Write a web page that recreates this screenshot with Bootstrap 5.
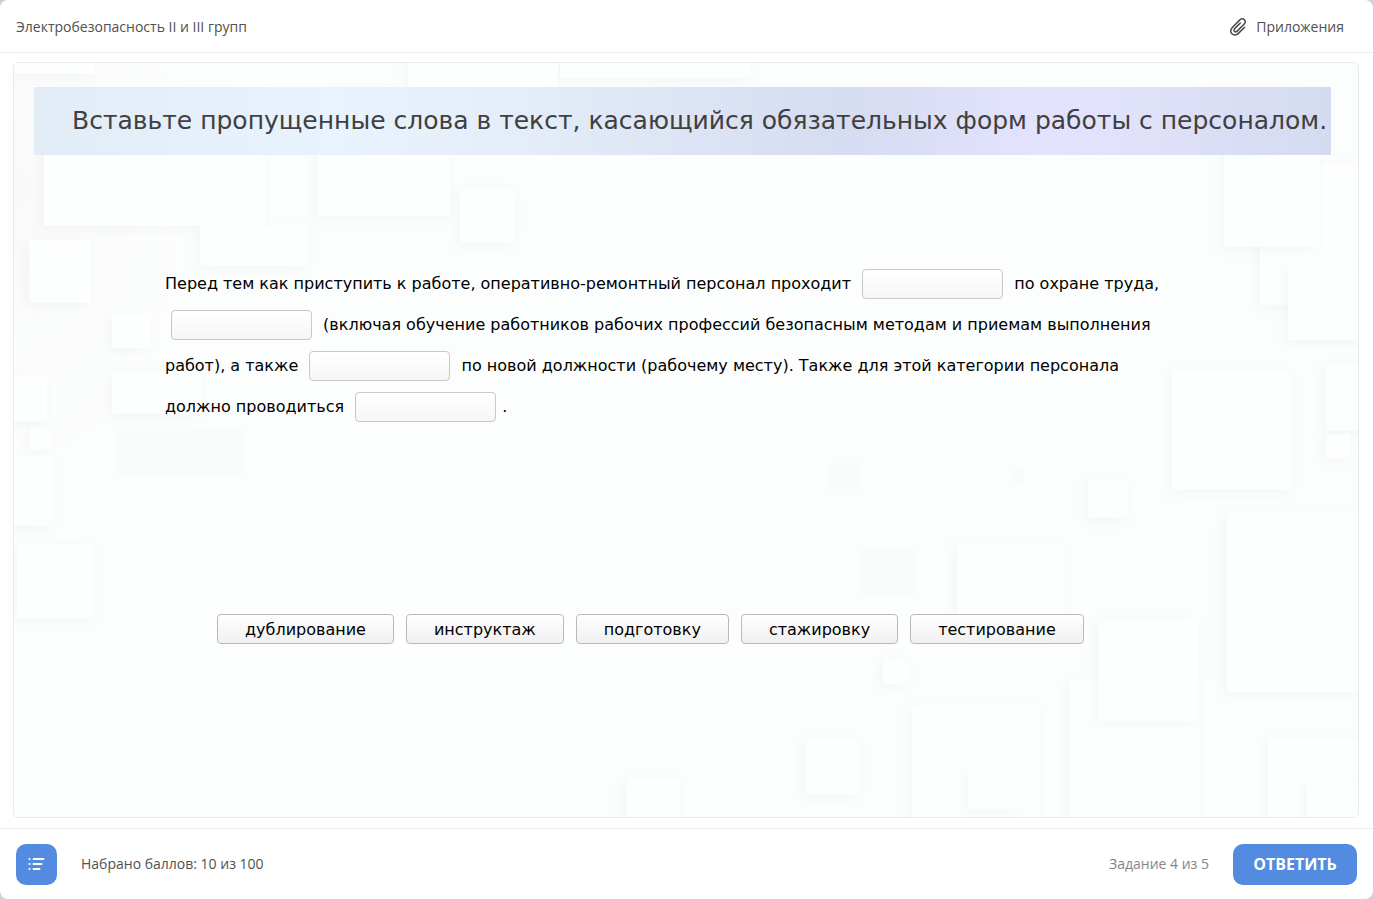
<!DOCTYPE html>
<html lang="ru">
<head>
<meta charset="utf-8">
<meta name="viewport" content="width=device-width, initial-scale=1">
<title>Электробезопасность II и III групп</title>
<link href="https://cdn.jsdelivr.net/npm/bootstrap@5.3.0/dist/css/bootstrap.min.css" rel="stylesheet">
<style>
  html { background: #cfcfcf; }
  body { font-family: "Open Sans", "Noto Sans", sans-serif; font-size: 14px; line-height: 20px; color: #505050; background: transparent; }
  .player { background: #fff; border-radius: 8px; }
  .top-bar { height: 53px; border-bottom: 1px solid #ececec; padding: 2px 29px 0 16px; }
  .attach-link { color: #505050; gap: 9px; }
  .stage { margin: 9px 14px 10px 13px; border: 1px solid #e9eaea; border-radius: 5px; background: #fcfefd; font-family: Verdana, "DejaVu Sans", sans-serif; }
  .backdrop { z-index: 0; }
  .stage-content { z-index: 1; padding: 24px 27px 40px 20px; }
  .task-banner { min-height: 68px; padding-left: 38px; background: linear-gradient(90deg, #e2ecf7 0%, #e9f3fd 23%, #e4edf9 37%, #d6dcf1 63%, #e4e3fe 78%, #dfe1f9 86%, #d4dbf0 100%); }
  .task-title { font-size: 25px; line-height: 34px; color: #404040; font-weight: 400; }
  .cloze { max-width: 1020px; margin: 108px 0 0 131px; font-size: 16px; line-height: 41px; color: #000; }
  .slot { width: 141px; height: 30px; margin: 0 6px 2px; vertical-align: middle; border: 1px solid #c8c8c8; border-radius: 4px; background: linear-gradient(#fff, #f6f6f6); padding: 0 8px; font-size: 16px; }
  .word-bank { margin: 187px 0 0 183px; gap: 12px; }
  .word-chip { height: 30px; padding: 1px 27px 0; border: 1px solid #b8baba; border-radius: 4px; background: linear-gradient(#fff, #f0f0f0); color: #000; font-size: 16px; line-height: 28px; }
  .bottom-bar { min-height: 71px; border-top: 1px solid #ececec; padding: 0 16px; }
  .menu-btn, .answer-btn { background: #528be0; color: #fff; height: 41px; border: 0; border-radius: 10px; }
  .menu-btn { width: 41px; }
  .answer-btn { width: 124px; font-size: 16px; font-weight: 700; }
  .step-info { color: #858585; }
</style>
</head>
<body>
<div class="player min-vh-100 d-flex flex-column">
  <header class="top-bar d-flex align-items-center justify-content-between">
    <span>Электробезопасность II и III групп</span>
    <a href="#" class="attach-link d-flex align-items-center text-decoration-none">
      <svg width="18" height="20" viewBox="0 0 18 20" fill="none" stroke="#4a4a4a" stroke-width="1.5" stroke-linecap="round" aria-hidden="true">
        <path d="M15.6 10.2L9.4 16.4C7.3 18.5 4.4 18.3 2.9 16.7C1.4 15.1 1.5 12.5 3.3 10.5L10.6 3.1C12.2 1.5 14.2 1.5 15.4 2.7C16.6 4 16.4 5.9 15 7.3L8.2 14.1C7.3 15 6.1 15 5.4 14.2C4.7 13.5 4.9 12.4 5.7 11.6L11.3 6"/>
      </svg>
      <span>Приложения</span>
    </a>
  </header>

  <main class="stage flex-grow-1 position-relative overflow-hidden">
    <svg class="backdrop position-absolute top-0 start-0 w-100 h-100" viewBox="14 63 1344 755" preserveAspectRatio="none" aria-hidden="true">
      <defs>
        <filter id="soft" x="-30%" y="-30%" width="160%" height="160%">
          <feDropShadow dx="-3" dy="3" stdDeviation="6" flood-color="#000" flood-opacity=".03"/>
        </filter>
        <radialGradient id="edge" cx="0" cy=".3" r="1"><stop offset="0" stop-color="#f9f9f9"/><stop offset=".65" stop-color="#fcfefd"/></radialGradient>
      </defs>
      <rect x="14" y="63" width="260" height="420" fill="url(#edge)"/>
      <g fill="#fdfefe" filter="url(#soft)">
        <rect x="-10" y="40" width="105" height="34" rx="3"/>
        <rect x="44" y="100" width="222" height="126" rx="3"/>
        <rect x="200" y="226" width="108" height="40" rx="3"/>
        <rect x="318" y="90" width="132" height="126" rx="3"/>
        <rect x="460" y="189" width="55" height="54" rx="3"/>
        <rect x="408" y="40" width="150" height="60"/>
        <rect x="560" y="40" width="190" height="38"/>
        <rect x="29" y="241" width="62" height="62" rx="3"/>
        <rect x="112" y="314" width="38" height="34" rx="3"/>
        <rect x="0" y="376" width="47" height="46" rx="3"/>
        <rect x="112" y="372" width="90" height="42" rx="3"/>
        <rect x="30" y="428" width="22" height="22" rx="3"/>
        <rect x="0" y="456" width="53" height="70" rx="3"/>
        <rect x="17" y="545" width="76" height="74" rx="3"/>
        <rect x="1260" y="165" width="110" height="140"/>
        <rect x="1326" y="365" width="60" height="66" rx="3"/>
        <rect x="1326" y="435" width="24" height="24" rx="3"/>
        <rect x="1088" y="480" width="40" height="38" rx="3"/>
        <rect x="957" y="544" width="106" height="90" rx="3"/>
        <rect x="1070" y="680" width="130" height="170"/>
        <rect x="883" y="660" width="26" height="24" rx="3"/>
        <rect x="912" y="706" width="128" height="130" rx="3"/>
        <rect x="806" y="740" width="54" height="56" rx="3"/>
        <rect x="1118" y="800" width="64" height="40" rx="3"/>
        <rect x="1268" y="739" width="100" height="100" rx="3"/>
        <rect x="626" y="780" width="54" height="60" rx="3"/>
      </g>
      <g fill="#fdfefe">
        <rect x="1224" y="90" width="96" height="157" rx="3" filter="url(#soft)"/>
        <rect x="1288" y="266" width="90" height="74" rx="3" filter="url(#soft)"/>
        <rect x="1172" y="371" width="120" height="119" rx="3" filter="url(#soft)"/>
        <rect x="1227" y="512" width="150" height="180" rx="3" filter="url(#soft)"/>
        <rect x="1098" y="620" width="100" height="102" rx="3" filter="url(#soft)"/>
        <rect x="968" y="772" width="52" height="38" rx="3" filter="url(#soft)"/>
        <rect x="1307" y="780" width="70" height="60" filter="url(#soft)"/>
      </g>
      <g fill="#fafcfb">
        <rect x="830" y="464" width="30" height="26"/>
        <rect x="1010" y="469" width="14" height="14"/>
        <rect x="862" y="548" width="56" height="50"/>
        <rect x="117" y="430" width="125" height="45"/>
      </g>
    </svg>

    <div class="stage-content position-relative">
      <div class="task-banner d-flex align-items-center">
        <h1 class="task-title mb-0">Вставьте пропущенные слова в текст, касающийся обязательных форм работы с персоналом.</h1>
      </div>

      <p class="cloze mb-0">Перед тем как приступить к работе, оперативно-ремонтный персонал проходит
        <input class="slot" type="text" readonly aria-label="Пропуск 1"> по охране труда,
        <input class="slot" type="text" readonly aria-label="Пропуск 2"> <span>(включая обучение работников рабочих профессий безопасным методам и приемам выполнения</span> <span>работ), а также</span>
        <input class="slot" type="text" readonly aria-label="Пропуск 3"> <span>по новой должности (рабочему месту). Также для этой категории персонала</span> <span>должно проводиться</span>
        <input class="slot" type="text" readonly aria-label="Пропуск 4">.</p>

      <div class="word-bank d-flex flex-wrap">
        <button type="button" class="word-chip">дублирование</button>
        <button type="button" class="word-chip">инструктаж</button>
        <button type="button" class="word-chip">подготовку</button>
        <button type="button" class="word-chip">стажировку</button>
        <button type="button" class="word-chip">тестирование</button>
      </div>
    </div>
  </main>

  <footer class="bottom-bar d-flex align-items-center">
    <button type="button" class="menu-btn d-flex align-items-center justify-content-center p-0" aria-label="Список вопросов">
      <svg width="17" height="14" viewBox="0 0 17 14" stroke="#fff" stroke-width="2" stroke-linecap="round" aria-hidden="true">
        <path d="M5.5 2H15.5M5.5 7H13.5M5.5 12H11.5M1.5 2H1.6M1.5 7H1.6M1.5 12H1.6"/>
      </svg>
    </button>
    <span class="ms-4">Набрано баллов: 10 из 100</span>
    <span class="step-info ms-auto me-4">Задание 4 из 5</span>
    <button type="button" class="answer-btn p-0">ОТВЕТИТЬ</button>
  </footer>
</div>
<script src="https://cdn.jsdelivr.net/npm/bootstrap@5.3.0/dist/js/bootstrap.bundle.min.js"></script>
</body>
</html>
